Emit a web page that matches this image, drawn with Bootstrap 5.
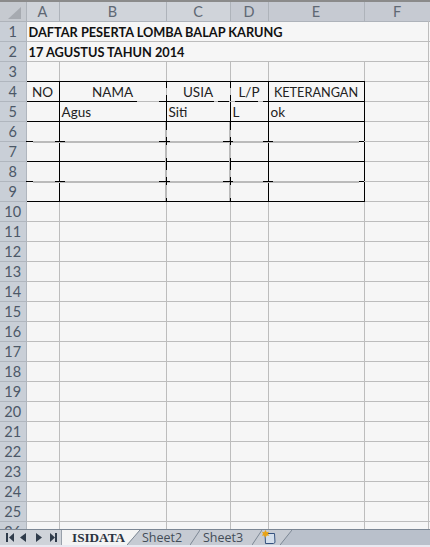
<!DOCTYPE html>
<html lang="en">
<head>
  <meta charset="UTF-8">
  <title>ISIDATA</title>
  <link href="https://cdn.jsdelivr.net/npm/bootstrap@5.3.0/dist/css/bootstrap.min.css" rel="stylesheet">
  <style>
    html, body { height: 547px; overflow: hidden; background: #f6f6f6; }
    body { font-family: Lato, "Liberation Sans", sans-serif; color: #222; }
    .sheet-wrap { height: 529px; overflow: hidden; border-top: 2px solid #8b8b8b; }
    .sheet-grid { border-collapse: collapse; table-layout: fixed; width: 430px; font-size: 13.5px; line-height: 18px; }
    .sheet-grid th, .sheet-grid td { height: 20px; padding: 1px 2px 0; border: 1px solid #bdbdbd; white-space: nowrap; overflow: visible; font-weight: 400; }
    .sheet-grid thead th { height: 19px; line-height: 17px; background: #d0d4da; border-color: #aeb3ba; border-top: 0; color: #5f6874; text-align: center; font-size: 14.5px; }
    .sheet-grid thead th.col-dim { background: #c6cad2; }
    .sheet-grid tbody th { background: #c9cfd7; border-color: #b0b6be; border-left: 0; color: #4c5867; text-align: center; font-size: 14.5px; padding: 1px 0 0; }
    .sheet-grid thead th.corner { background: #c6cad0; padding: 0; border-left: 0; }
    .corner svg { display: block; }
    .sheet-grid td.title { font-weight: 700; color: #111; font-size: 12.75px; }
    .sheet-grid td.hd { text-align: center; }
    .sheet-grid td.hd-wide { font-size: 12.7px; }
    .sheet-grid td.bt { border-top-color: #000; }
    .sheet-grid td.bb { border-bottom-color: #000; }
    .sheet-grid td.bl { border-left-color: #000; }
    .sheet-grid td.br { border-right-color: #000; }
    .ticks { left: 0; top: -2px; pointer-events: none; }
    .tab-strip { height: 18px; background: #b9c0cb; border-top: 1px solid #7c8794; border-bottom: 2px solid #e9e9f1; }
    .nav-arrows { width: 62px; background: #cfd3d9; border-right: 1px solid #98a0aa; }
    .tab-label { font-family: "Open Sans", sans-serif; font-size: 12.5px; line-height: 15px; color: #434c57; background: #c6cbd3; white-space: nowrap; }
    .tab-active { width: 65px; padding-left: 10px; background: #f4f4f4; font-family: "Liberation Serif", serif; font-weight: 700; font-size: 13.2px; color: #2b3340; }
    .tab-two { width: 50px; padding-left: 2px; }
    .tab-three { width: 52px; padding-left: 3px; }
    .tab-new { width: 18px; background: #c6cbd3; }
    .tab-strip svg { display: block; flex: none; }
  </style>
</head>
<body>
  <div class="sheet-wrap position-relative">
    <table class="sheet-grid">
      <colgroup>
        <col style="width:26px"><col style="width:33px"><col style="width:107px"><col style="width:64px"><col style="width:38px"><col style="width:96px"><col style="width:66px">
      </colgroup>
      <thead>
        <tr>
          <th class="corner"><svg width="26" height="18" viewBox="0 0 26 18"><polygon points="21,5 8,17 21,17" fill="#a6aab0"/></svg></th>
          <th>A</th><th>B</th><th>C</th><th class="col-dim">D</th><th class="col-dim">E</th><th class="col-dim">F</th>
        </tr>
      </thead>
      <tbody>
        <tr><th>1</th><td class="title" colspan="6">DAFTAR PESERTA LOMBA BALAP KARUNG</td></tr>
        <tr><th>2</th><td class="title" colspan="6">17 AGUSTUS TAHUN 2014</td></tr>
        <tr><th>3</th><td class="bb"></td><td class="bb"></td><td class="bb"></td><td class="bb"></td><td class="bb"></td><td></td></tr>
        <tr><th>4</th><td class="hd bt bb bl br">NO</td><td class="hd bt bb bl br">NAMA</td><td class="hd bt bb bl br">USIA</td><td class="hd bt bb bl br">L/P</td><td class="hd hd-wide bt bb bl br">KETERANGAN</td><td></td></tr>
        <tr><th>5</th><td class="bt bb bl br"></td><td class="bt bb bl br">Agus</td><td class="bt bb bl br">Siti</td><td class="bt bb bl br">L</td><td class="bt bb bl br">ok</td><td></td></tr>
        <tr><th>6</th><td class="bt bl br"></td><td class="bt bl"></td><td class="bt"></td><td class="bt br"></td><td class="bt bl br"></td><td></td></tr>
        <tr><th>7</th><td class="bb bl br"></td><td class="bb bl"></td><td class="bb"></td><td class="bb br"></td><td class="bb bl br"></td><td></td></tr>
        <tr><th>8</th><td class="bt bl br"></td><td class="bt bl"></td><td class="bt"></td><td class="bt br"></td><td class="bt bl br"></td><td></td></tr>
        <tr><th>9</th><td class="bb bl br"></td><td class="bb bl"></td><td class="bb"></td><td class="bb br"></td><td class="bb bl br"></td><td></td></tr>
        <tr><th>10</th><td class="bt"></td><td class="bt"></td><td class="bt"></td><td class="bt"></td><td class="bt"></td><td></td></tr>
        <tr><th>11</th><td></td><td></td><td></td><td></td><td></td><td></td></tr>
        <tr><th>12</th><td></td><td></td><td></td><td></td><td></td><td></td></tr>
        <tr><th>13</th><td></td><td></td><td></td><td></td><td></td><td></td></tr>
        <tr><th>14</th><td></td><td></td><td></td><td></td><td></td><td></td></tr>
        <tr><th>15</th><td></td><td></td><td></td><td></td><td></td><td></td></tr>
        <tr><th>16</th><td></td><td></td><td></td><td></td><td></td><td></td></tr>
        <tr><th>17</th><td></td><td></td><td></td><td></td><td></td><td></td></tr>
        <tr><th>18</th><td></td><td></td><td></td><td></td><td></td><td></td></tr>
        <tr><th>19</th><td></td><td></td><td></td><td></td><td></td><td></td></tr>
        <tr><th>20</th><td></td><td></td><td></td><td></td><td></td><td></td></tr>
        <tr><th>21</th><td></td><td></td><td></td><td></td><td></td><td></td></tr>
        <tr><th>22</th><td></td><td></td><td></td><td></td><td></td><td></td></tr>
        <tr><th>23</th><td></td><td></td><td></td><td></td><td></td><td></td></tr>
        <tr><th>24</th><td></td><td></td><td></td><td></td><td></td><td></td></tr>
        <tr><th>25</th><td></td><td></td><td></td><td></td><td></td><td></td></tr>
        <tr><th>26</th><td></td><td></td><td></td><td></td><td></td><td></td></tr>
      </tbody>
    </table>
    <!-- broken border bits over the table, page coordinates -->
    <svg class="ticks position-absolute" width="430" height="529" viewBox="0 0 430 529" shape-rendering="crispEdges">
      <rect x="428" y="21" width="1" height="508" fill="#bdbdbd"/>
      <g fill="#bbb">
        <rect x="137" y="101" width="22" height="1"/><rect x="214" y="101" width="4" height="1"/>
        <rect x="229" y="101" width="6" height="1"/><rect x="258" y="101" width="5" height="1"/>
        <rect x="166" y="88" width="1" height="7"/><rect x="230" y="88" width="1" height="7"/>
        <rect x="33" y="141" width="326" height="2"/><rect x="33" y="181" width="326" height="2"/>
        <rect x="165" y="122" width="2" height="79"/><rect x="229" y="122" width="2" height="79"/>
      </g>
      <g fill="#000">
        <rect x="26" y="141" width="7" height="1"/><rect x="55" y="141" width="10" height="1"/><rect x="159" y="141" width="11" height="1"/><rect x="223" y="141" width="10" height="1"/><rect x="263" y="141" width="10" height="1"/><rect x="359" y="141" width="5" height="1"/>
        <rect x="26" y="181" width="7" height="1"/><rect x="55" y="181" width="10" height="1"/><rect x="159" y="181" width="11" height="1"/><rect x="223" y="181" width="10" height="1"/><rect x="263" y="181" width="10" height="1"/><rect x="359" y="181" width="5" height="1"/>
        <rect x="166" y="121" width="1" height="9"/><rect x="166" y="137" width="1" height="8"/><rect x="166" y="158" width="1" height="12"/><rect x="166" y="177" width="1" height="8"/><rect x="166" y="198" width="1" height="4"/>
        <rect x="230" y="121" width="1" height="9"/><rect x="230" y="137" width="1" height="8"/><rect x="230" y="158" width="1" height="12"/><rect x="230" y="177" width="1" height="8"/><rect x="230" y="198" width="1" height="4"/>
      </g>
    </svg>
  </div>
  <div class="tab-strip d-flex">
    <div class="nav-arrows">
      <svg width="61" height="15" viewBox="0 0 61 15">
        <g fill="#303c4b">
          <rect x="6" y="3" width="2" height="9"/><polygon points="14,3 14,12 9,7.5"/>
          <polygon points="26,3 26,12 20,7.5"/>
          <polygon points="36,3 36,12 42,7.5"/>
          <polygon points="50,3 50,12 55,7.5"/><rect x="55" y="3" width="2" height="9"/>
        </g>
      </svg>
    </div>
    <div class="tab-label tab-active">ISIDATA</div>
    <svg width="13" height="15" viewBox="0 0 13 15"><polygon points="0,0 13,0 0,15" fill="#f4f4f4"/><polygon points="13,0 13,15 0,15" fill="#c6cbd3"/><line x1="13" y1="0" x2="0" y2="15" stroke="#7c8794"/></svg>
    <div class="tab-label tab-two">Sheet2</div>
    <svg width="10" height="15" viewBox="0 0 10 15"><polygon points="0,0 10,0 10,15 0,15" fill="#c6cbd3"/><line x1="10" y1="0" x2="0" y2="15" stroke="#7c8794"/></svg>
    <div class="tab-label tab-three">Sheet3</div>
    <svg width="10" height="15" viewBox="0 0 10 15"><polygon points="0,0 10,0 10,15 0,15" fill="#c6cbd3"/><line x1="10" y1="0" x2="0" y2="15" stroke="#7c8794"/></svg>
    <div class="tab-new">
      <svg width="16" height="15" viewBox="0 0 16 15">
        <path d="M3 3.5H12.5L13 12.5L11.5 13.5H3.5Z" fill="#d3deeb" stroke="#35527f"/>
        <path d="M3.5 0L4.8 2.2L7.2 1.8L5.9 3.8L7.2 5.8L4.8 5.4L3.5 7.6L2.2 5.4L0 5.8L1 3.8L0 1.8L2.2 2.2Z" fill="#e8a317"/>
      </svg>
    </div>
    <svg width="12" height="15" viewBox="0 0 12 15"><polygon points="0,0 12,0 0,15" fill="#c6cbd3"/><line x1="12" y1="0" x2="0" y2="15" stroke="#7c8794"/></svg>
  </div>
</body>
</html>
